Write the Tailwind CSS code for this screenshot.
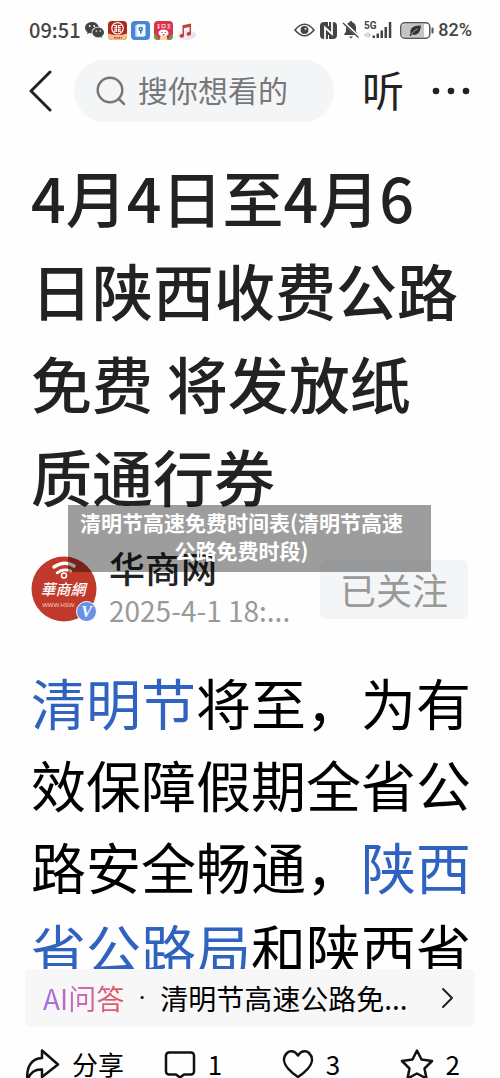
<!DOCTYPE html>
<html lang="zh-CN">
<head>
    <meta charset="UTF-8">
    <meta name="viewport" content="width=device-width, initial-scale=1.0">
    <title>4月4日至4月6日陕西收费公路免费 将发放纸质通行券</title>
    <script src="https://cdn.jsdelivr.net/npm/@tailwindcss/browser@4"></script>
</head>

<body class="relative flex h-screen flex-col overflow-hidden bg-[#fefefe] font-['Noto_Sans_CJK_SC',sans-serif] text-[#222]">

    <!-- Status bar -->
    <div class="flex h-[60px] shrink-0 items-center justify-between pr-7 pl-[29px] text-[#444]">
        <div class="flex items-center gap-1">
            <span class="text-[20px] leading-6 font-medium">09:51</span>
            <!-- WeChat -->
            <svg class="h-[18px] w-[19px]" viewBox="0 0 19 18">
                <path fill="#444" d="M7 1C3 1 0 3.600 0 6.800c0 1.800 1 3.300 2.500 4.400L2 13.200l2.400-1.200c.8.200 1.600.3 2.400.3C6 8.500 9 5.600 13.800 5.700 13 3 10.300 1 7 1z"/>
                <path fill="#444" d="M19 11.500c0-2.700-2.600-4.900-5.800-4.900s-5.800 2.200-5.800 4.900 2.600 4.900 5.800 4.900c.7 0 1.400-.1 2-.3l2 1-.5-1.800c1.400-.9 2.300-2.200 2.300-3.800z"/>
                <g fill="#fff"><circle cx="4.700" cy="5" r=".9"/><circle cx="9.200" cy="5" r=".9"/><circle cx="11.300" cy="10" r=".8"/><circle cx="15.200" cy="10" r=".8"/></g>
            </svg>
            <!-- Bank -->
            <svg class="h-[19px] w-[19px]" viewBox="0 0 19 19">
                <rect width="19" height="19" rx="4" fill="#b3261e"/>
                <path fill="#f3c08c" d="M0 12.500q9.500 3 19 0V15a4 4 0 0 1-4 4H4a4 4 0 0 1-4-4z"/>
                <circle cx="9.500" cy="7.300" r="5.700" fill="#b3261e" stroke="#fff" stroke-width="1.200"/>
                <path fill="none" stroke="#fff" stroke-width="1.200" d="M6 4.500h2.500v2H6.300M13 4.500h-2.500v2h2.200M6 10.200h2.500v-2H6.300M13 10.200h-2.500v-2h2.200"/>
                <path stroke="#c0392b" stroke-width="1.500" stroke-dasharray="1.500 .8" d="M6 16.800h8"/>
            </svg>
            <!-- Card wallet -->
            <svg class="h-[19px] w-[19px]" viewBox="0 0 19 19">
                <rect width="19" height="19" rx="4" fill="#4a86d3"/>
                <rect x="4" y="4" width="9" height="12" rx="1" fill="#a9c8f0"/>
                <rect x="5.500" y="3.300" width="9" height="12" rx="1" fill="#f4f9ff"/>
                <circle cx="9.800" cy="8" r="2.300" fill="#3b74c4"/>
                <path fill="#3b74c4" d="M9 9.500h1.600v3H9z"/>
                <circle cx="9.800" cy="8" r=".8" fill="#fff"/>
            </svg>
            <!-- Game -->
            <svg class="h-[19px] w-[19px]" viewBox="0 0 19 19">
                <rect width="19" height="19" rx="4" fill="#d8344f"/>
                <path fill="#59a84f" d="M0 13q2 0 5 6H4a4 4 0 0 1-4-4zM19 13q-2 0-5 6h1a4 4 0 0 0 4-4z"/>
                <path stroke="#f7b6bd" stroke-width="1.200" d="M3 4h3M3 6.500h3M4.500 3v5M8 3.500h3v3H8zM13 4h3.500M14.800 3v4.500M13 7h3.500" fill="none"/>
                <ellipse cx="9.500" cy="12" rx="5" ry="3.600" fill="#fff"/>
                <path fill="#f6d7a8" d="M6.500 15h6l1 4h-8z"/>
                <circle cx="8" cy="11.500" r=".6" fill="#333"/><circle cx="11.200" cy="11.500" r=".6" fill="#333"/>
                <path fill="#e4572e" d="M8.700 13h2v1.500h-2z"/>
            </svg>
            <!-- Music -->
            <svg class="h-[19px] w-[19px]" viewBox="0 0 19 19">
                <defs>
                    <linearGradient id="music" x1="0" x2="1"><stop stop-color="#fff2ee"/><stop offset="1" stop-color="#e9dcfa"/></linearGradient>
                </defs>
                <ellipse cx="9.500" cy="14" rx="9.500" ry="5" fill="url(#music)"/>
                <path fill="#b8443c" d="M5.500 4.200 14 2.500v10.300a2.200 1.900 0 1 1-1.500-1.700V6L7 7.200v7.600a2.200 1.900 0 1 1-1.500-1.700z"/>
            </svg>
        </div>

        <div class="flex items-center gap-1">
            <!-- Eye comfort -->
            <svg class="h-[14px] w-[21px]" viewBox="0 0 21 14" fill="none" stroke="#444" stroke-width="1.500">
                <path d="M1 7Q10.500-4.500 20 7 10.500 18.500 1 7z"/>
                <circle cx="10.500" cy="7" r="3.200" fill="#444"/>
                <circle cx="11.500" cy="5.800" r="1.100" fill="#ddd" stroke="none"/>
            </svg>
            <!-- NFC -->
            <svg class="ml-px h-[17px] w-[17px]" viewBox="0 0 17 17">
                <rect width="17" height="17" rx="4" fill="#444"/>
                <path fill="none" stroke="#fefefe" stroke-width="1.800" d="M5 17V5.500L12 12V0"/>
                <path fill="none" stroke="#fefefe" stroke-width="1" d="M8.500 17v-4M8.500 0v4"/>
            </svg>
            <!-- Muted bell -->
            <svg class="ml-px h-[18px] w-[18px]" viewBox="0 0 18 18">
                <path fill="#444" d="M9 0c.8 0 1.300.6 1.300 1.300C12.800 2 14 4 14 6.500v4l1.800 2.700v.8H2.200v-.8L4 10.500v-4C4 4 5.200 2 7.700 1.300 7.700.6 8.200 0 9 0zM7 15.500h4L9 17.500z"/>
                <path stroke="#fefefe" stroke-width="3" d="m1 1 16 15"/>
                <path stroke="#444" stroke-width="1.300" d="m1 2 15.500 14.500"/>
            </svg>
            <!-- 5G signal -->
            <svg class="h-[18px] w-[28px]" viewBox="0 0 28 18">
                <text x="0" y="8" font-family="Roboto, sans-serif" font-size="10" font-weight="700" fill="#444">5G</text>
                <path fill="#bbb" d="M0 14l2.500-2v4zM3.500 11h1v6h-1zM7 14l-2-2v4z"/>
                <path fill="#444" d="M8.500 14.500H11V17H8.500zM12.500 12.500H15V17h-2.500zM16.500 9.500H19V17h-2.500zM20.500 6H23v11h-2.500zM24.800 1h2.500v16h-2.500z"/>
            </svg>
            <!-- Battery -->
            <svg class="ml-1 h-[17px] w-[34px]" viewBox="0 0 34 17">
                <rect x=".8" y=".8" width="29" height="15.400" rx="4" fill="#fff" stroke="#555" stroke-width="1.500"/>
                <path fill="#c4c4c4" d="M5 2h19v13H5a3 3 0 0 1-3-3V5a3 3 0 0 1 3-3z"/>
                <path fill="#333" d="M21 3.500C14 3 9.500 6 10.500 11.500L9.500 14h1.200l1-1.500c5.300 1.500 8.800-2 9.300-9z"/>
                <path stroke="#c4c4c4" stroke-width=".8" fill="none" d="M11.500 12q3-4 6-5"/>
                <rect x="31.500" y="5.500" width="2" height="6" rx="1" fill="#555"/>
            </svg>
            <span class="font-[Roboto,sans-serif] text-[18px] leading-6 font-medium">82%</span>
        </div>
    </div>

    <!-- Top navigation -->
    <header class="flex h-[62px] shrink-0 items-center pr-[30px] pl-7">
        <button class="w-[46px]" aria-label="返回">
            <svg class="h-[42px] w-[24px]" viewBox="0 0 24 42" fill="none" stroke="#222" stroke-width="3" stroke-linecap="round" stroke-linejoin="round"><path d="M22 2 3 21l19 19"/></svg>
        </button>
        <label class="flex h-full min-w-0 flex-1 items-center rounded-full bg-[#f3f5f7] pl-[22px]">
            <span class="sr-only">搜索</span>
            <svg class="mr-3 h-[30px] w-[30px] shrink-0" viewBox="0 0 30 30" fill="none" stroke="#777" stroke-width="2.500" stroke-linecap="round"><circle cx="14" cy="14" r="12.300"/><path d="m23 23 5 5"/></svg>
            <input type="text" placeholder="搜你想看的" class="h-full w-full min-w-0 bg-transparent pb-1 text-[30px] outline-none placeholder:text-[#777]">
        </label>
        <button class="ml-7 pb-1 text-[42px] leading-[58px]">听</button>
        <button class="ml-6 pl-1" aria-label="更多">
            <svg class="h-2 w-[38px]" viewBox="0 0 38 8" fill="#222"><circle cx="4" cy="4" r="3.300"/><circle cx="19" cy="4" r="3.300"/><circle cx="34" cy="4" r="3.300"/></svg>
        </button>
    </header>

    <main class="min-h-0 flex-1 overflow-hidden pt-7 pr-7 pl-[31px]">
        <h1 class="pr-2 text-[61px] leading-[93px] font-medium">4月4日至4月6日陕西收费公路免费 将发放纸质通行券</h1>

        <!-- Author -->
        <div class="mt-6 flex items-center">
            <svg class="h-[66px] w-[66px] shrink-0" viewBox="0 0 66 66">
                <circle cx="33" cy="33" r="32.500" fill="#c0392b"/>
                <g fill="none" stroke="#fff" stroke-linecap="round">
                    <path stroke-width="3.500" d="M23 11q11-7 20-1"/>
                    <path stroke-width="2.500" d="M26 17q6-5 14-2"/>
                    <circle cx="33" cy="19.500" r="2.500" stroke-width="1.500"/>
                </g>
                <text x="32" y="39" text-anchor="middle" font-family="Noto Sans CJK TC, sans-serif" font-size="15" font-weight="500" font-style="italic" fill="#fff">華商網</text>
                <text x="28" y="51" text-anchor="middle" font-family="Liberation Sans, sans-serif" font-size="6" fill="#f3cfca">WWW.HSW.</text>
                <circle cx="55.500" cy="55.500" r="10" fill="#6792e8" stroke="#fff" stroke-width="1"/>
                <text x="55.500" y="61" text-anchor="middle" font-family="Liberation Serif, serif" font-size="16" font-style="italic" font-weight="700" fill="#fff">V</text>
            </svg>
            <div class="ml-3 min-w-0 flex-1">
                <div class="text-[36px] leading-[42px] font-medium">华商网</div>
                <div class="text-[28px] leading-[44px] whitespace-nowrap text-[#999]">2025-4-1 18:...</div>
            </div>
            <button class="mr-1 h-[59px] shrink-0 rounded-md bg-[#f3f5f7] px-5 text-[36px] leading-[58px] text-[#999]">已关注</button>
        </div>

        <p class="mt-7 text-[55px] leading-[82px] text-black"><a href="#" class="text-[#2f63bf]">清明节</a>将至，为有效保障假期全省公路安全畅通，<a href="#" class="text-[#2f63bf]">陕西省公路局</a>和陕西省</p>
    </main>

    <!-- Bottom bar -->
    <footer class="h-[109px] shrink-0 text-black">
        <a href="#" class="mx-[25px] flex h-[58px] items-center rounded-md bg-[#f7f7f7] pr-5 pl-[18px] text-[28px] leading-10">
            <span class="bg-linear-to-r from-[#a070e0] via-[#d066b0] to-[#e05050] bg-clip-text text-transparent">AI问答</span>
            <span class="w-9 text-center font-[Roboto,sans-serif]">·</span>
            <span class="flex-1 whitespace-nowrap">清明节高速公路免...</span>
            <svg class="h-[22px] w-[14px]" viewBox="0 0 14 22" fill="none" stroke="#222" stroke-width="2" stroke-linecap="round" stroke-linejoin="round"><path d="m2 2 9 9-9 9"/></svg>
        </a>
        <div class="grid grid-cols-[139fr_118fr_118fr_60fr] items-center pt-[17px] pr-10 pl-[25px] text-[26px] leading-10">
            <button class="flex items-center gap-3">
                <svg class="h-[34px] w-[35px]" viewBox="0 0 35 34" fill="none" stroke="#111" stroke-width="2.500" stroke-linejoin="round"><path d="M17 3.500 33 17.500 17 30v-7.500C10 22 5 26 2.500 33 1 19 7 11.500 17 11z"/></svg>
                分享
            </button>
            <button class="flex items-center gap-3">
                <svg class="h-[30px] w-[32px]" viewBox="0 0 32 30" fill="none" stroke="#111" stroke-width="2.500" stroke-linejoin="round"><path d="M5 3.500h22a3 3 0 0 1 3 3v16a3 3 0 0 1-3 3h-7l-4 3-4-3H5a3 3 0 0 1-3-3v-16a3 3 0 0 1 3-3z"/></svg>
                1
            </button>
            <button class="flex items-center gap-3">
                <svg class="h-[30px] w-[32px]" viewBox="0 0 32 30" fill="none" stroke="#111" stroke-width="2.500" stroke-linejoin="round"><path d="M16 6.500C12.500 1 7.500 1.500 5 4c-5 5-3 11 1 15.500 3 3.500 7 6.500 10 8.500 3-2 7-5 10-8.500 4-4.500 6-10.500 1-15.500-2.500-2.500-7.500-3-11 2.500z"/></svg>
                3
            </button>
            <button class="flex items-center gap-3">
                <svg class="h-[32px] w-[34px]" viewBox="0 0 34 32" fill="none" stroke="#111" stroke-width="2.500" stroke-linejoin="round"><path d="m17 2.500 4.500 9 10.500 1.500-7.500 7.500 2 10L17 25.500 7.500 30.500l2-10L2 13l10.500-1.500z"/></svg>
                2
            </button>
        </div>
    </footer>

    <!-- Caption over the article -->
    <div class="absolute top-[505px] left-[68px] w-[363px] bg-black/38 pt-[3px] pr-6 pb-2 pl-2 text-center text-[21px] leading-7 font-bold text-white">清明节高速免费时间表(清明节高速公路免费时段)</div>
</body>
</html>
